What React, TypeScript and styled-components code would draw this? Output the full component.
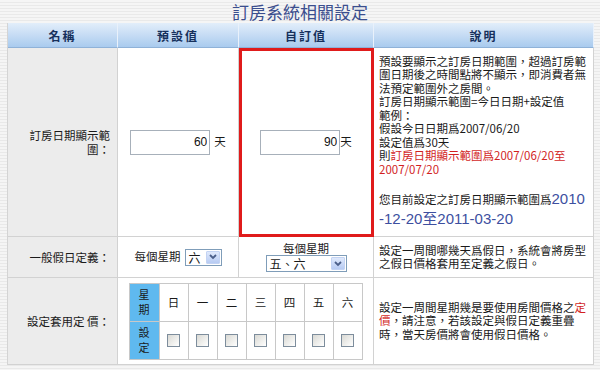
import React from "react";
import styled, { createGlobalStyle } from "styled-components";

const Global = createGlobalStyle`
  html, body { margin: 0; padding: 0; }
  body {
    width: 600px;
    height: 370px;
    overflow: hidden;
    background: repeating-linear-gradient(to bottom, #f5f5f5 0px, #f5f5f5 2px, #e9e9e9 2px, #e9e9e9 3px);
    font-family: "Noto Sans CJK TC", "Liberation Sans", sans-serif;
    color: #1a1a1a;
  }
`;

const Page = styled.div`
  width: 600px;
  height: 370px;
  padding: 0 7px;
  box-sizing: border-box;
  display: flex;
  flex-direction: column;
`;

const Title = styled.h1`
  margin: 0;
  height: 23px;
  line-height: 23px;
  text-align: center;
  font-size: 17px;
  font-weight: normal;
  color: #3b4e8e;
`;

const Grid = styled.div`
  display: grid;
  grid-template-columns: 110px 121px 135px 220px;
  grid-template-rows: 25px 189px 41px 87px;
  border-left: 1px solid #d4d4d4;
`;

const Head = styled.div`
  display: flex;
  align-items: center;
  justify-content: center;
  background: linear-gradient(to bottom, #e2eefa 0%, #c6dcf4 50%, #a9cbee 100%);
  border-right: 1px solid #e9f1fb;
  border-bottom: 1px solid #8fb2d8;
  font-size: 12px;
  font-weight: bold;
  letter-spacing: 2px;
  color: #16305c;
`;

const Label = styled.div`
  display: flex;
  align-items: center;
  justify-content: flex-end;
  text-align: right;
  padding-right: 7px;
  background: #ececec;
  border-right: 1px solid #d2d2d2;
  border-bottom: 1px solid #d2d2d2;
  font-size: 11.5px;
  line-height: 14px;
`;

const Text = styled.span`
  display: block;
`;

const Value = styled.div<{ $span?: number; $highlight?: boolean }>`
  grid-column: span ${(p) => p.$span ?? 1};
  display: flex;
  flex-direction: column;
  align-items: center;
  justify-content: center;
  background: #fff;
  border-right: 1px solid #d2d2d2;
  border-bottom: 1px solid #d2d2d2;
  font-size: 11.5px;
  line-height: 13.5px;
  ${(p) => (p.$highlight ? "outline: 3px solid #e01b1b; outline-offset: -3px;" : "")}
`;

const Desc = styled.div`
  display: flex;
  flex-direction: column;
  justify-content: center;
  background: #fff;
  padding-left: 5px;
  border-right: 1px solid #d2d2d2;
  border-bottom: 1px solid #d2d2d2;
  font-size: 11.5px;
  line-height: 13.5px;
  white-space: nowrap;
`;

const Red = styled.span`
  color: #d21f1f;
`;

const Current = styled.div`
  margin-top: 13px;
  line-height: 20px;
`;

const Big = styled.span`
  font-family: "Liberation Sans", "Noto Sans CJK TC", sans-serif;
  font-size: 15px;
  color: #3d4f9f;
`;

const Row = styled.div<{ $gap?: number }>`
  display: flex;
  align-items: center;
  gap: ${(p) => p.$gap ?? 0}px;
`;

const NumInput = styled.input`
  width: 80px;
  height: 25px;
  box-sizing: border-box;
  border: 1px solid #a7b0ba;
  padding: 0 2px;
  text-align: right;
  font: 12px "Liberation Sans", sans-serif;
  color: #111;
  background: #fff;
  outline: none;
  margin: 0;
`;

const Select = styled.span<{ $w: number }>`
  display: inline-flex;
  align-items: center;
  justify-content: space-between;
  width: ${(p) => p.$w}px;
  height: 17px;
  box-sizing: border-box;
  border: 1px solid #7f9db9;
  background: #fff;
  font-size: 12px;
  line-height: 15px;
  padding: 0 1px 0 3px;
`;

const Arrow = styled.span`
  width: 14px;
  height: 13px;
  box-sizing: border-box;
  background: linear-gradient(to bottom, #dfe9fc, #b7cbf3);
  border: 1px solid #c3d3f3;
  border-radius: 1px;
  display: flex;
  align-items: center;
  justify-content: center;
`;

const Week = styled.div`
  display: grid;
  grid-template-columns: 30px repeat(7, 29px);
  grid-template-rows: 38px 38px;
  border-left: 1px solid #c8c8c8;
  border-top: 1px solid #c8c8c8;
`;

const WeekCell = styled.div<{ $head?: boolean }>`
  display: flex;
  align-items: center;
  justify-content: center;
  text-align: center;
  border-right: 1px solid #c8c8c8;
  border-bottom: 1px solid #c8c8c8;
  background: ${(p) => (p.$head ? "#5fb9ef" : "#fff")};
  font-size: ${(p) => (p.$head ? "11px" : "11.5px")};
  line-height: ${(p) => (p.$head ? "15px" : "13px")};
`;

const Check = styled.span`
  width: 13px;
  height: 13px;
  box-sizing: border-box;
  border: 1px solid #7d8d9c;
  background: linear-gradient(135deg, #d9d9d4 0%, #f4f4f2 70%, #ffffff 100%);
`;

const Chevron = () => (
  <svg width="8" height="6" viewBox="0 0 8 6">
    <polyline points="1,1 4,4 7,1" fill="none" stroke="#4b5f8a" strokeWidth="1.8" />
  </svg>
);

const days = ["日", "一", "二", "三", "四", "五", "六"];

export default function App() {
  return (
    <>
      <Global />
      <Page>
        <Title>訂房系統相關設定</Title>
        <Grid>
          <Head>名稱</Head>
          <Head>預設值</Head>
          <Head>自訂值</Head>
          <Head>說明</Head>

          <Label>
            <Text>
              訂房日期顯示範
              <br />
              圍：
            </Text>
          </Label>
          <Value>
            <Row $gap={4}>
              <NumInput defaultValue="60" readOnly />
              <span>天</span>
            </Row>
          </Value>
          <Value $highlight>
            <Row>
              <NumInput defaultValue="90" readOnly />
              <span>天</span>
            </Row>
          </Value>
          <Desc>
            <div>
              預設要顯示之訂房日期範圍，超過訂房範
              <br />
              圍日期後之時間點將不顯示，即消費者無
              <br />
              法預定範圍外之房間。
              <br />
              訂房日期顯示範圍=今日日期+設定值
              <br />
              範例：
              <br />
              假設今日日期爲2007/06/20
              <br />
              設定值爲30天
              <br />
              則
              <Red>
                訂房日期顯示範圍爲2007/06/20至
                <br />
                2007/07/20
              </Red>
            </div>
            <Current>
              您目前設定之訂房日期顯示範圍爲
              <Big>
                2010
                <br />
                -12-20至2011-03-20
              </Big>
            </Current>
          </Desc>

          <Label>
            <Text>一般假日定義：</Text>
          </Label>
          <Value>
            <Row $gap={4}>
              <span>每個星期</span>
              <Select $w={37}>
                <span>六</span>
                <Arrow>
                  <Chevron />
                </Arrow>
              </Select>
            </Row>
          </Value>
          <Value>
            <Text>每個星期</Text>
            <Select $w={81}>
              <span>五、六</span>
              <Arrow>
                <Chevron />
              </Arrow>
            </Select>
          </Value>
          <Desc>
            <div>
              設定一周間哪幾天爲假日，系統會將房型
              <br />
              之假日價格套用至定義之假日。
            </div>
          </Desc>

          <Label>
            <Text>設定套用定 價：</Text>
          </Label>
          <Value $span={2}>
            <Week>
              <WeekCell $head>
                <Text>
                  星<br />期
                </Text>
              </WeekCell>
              {days.map((d) => (
                <WeekCell key={d}>
                  <Text>{d}</Text>
                </WeekCell>
              ))}
              <WeekCell $head>
                <Text>
                  設<br />定
                </Text>
              </WeekCell>
              {days.map((d) => (
                <WeekCell key={"c" + d}>
                  <Check />
                </WeekCell>
              ))}
            </Week>
          </Value>
          <Desc>
            <div>
              設定一周間星期幾是要使用房間價格之<Red>定</Red>
              <br />
              <Red>價</Red>，請注意，若該設定與假日定義重疊
              <br />
              時，當天房價將會使用假日價格。
            </div>
          </Desc>
        </Grid>
      </Page>
    </>
  );
}
